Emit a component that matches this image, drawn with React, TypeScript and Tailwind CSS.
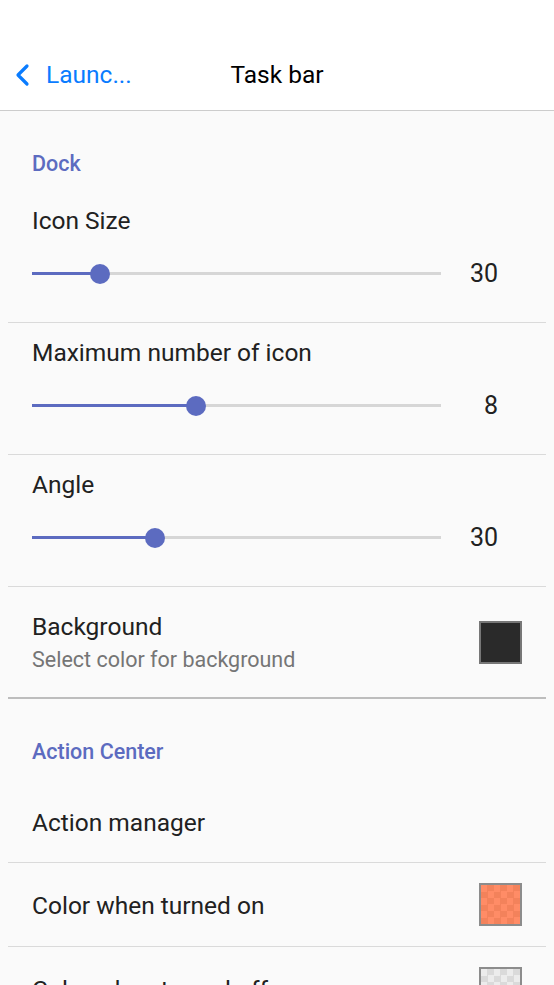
import React from "react";

const ACCENT = "#5c6bc0";

function SliderRow({ label, value, percent }: { label: string; value: string; percent: number }) {
  return (
    <div className="h-[132px] border-b border-[#dadada] pl-[24px] pt-[15px]">
      <div className="text-[24.5px] leading-[30px] text-[#212121]">{label}</div>
      <div className="mt-[23px] flex items-center">
        <div className="relative h-[20px] w-[409px]">
          <div className="absolute left-0 right-0 top-[8px] h-[3px] bg-[#d6d6d6]" />
          <div className="absolute left-0 top-[8px] h-[3px] bg-[#5c6bc0]" style={{ width: `${percent}%` }} />
          <div
            className="absolute top-0 -ml-[10px] h-[20px] w-[20px] rounded-full bg-[#5c6bc0]"
            style={{ left: `${percent}%` }}
          />
        </div>
        <div className="flex-1 pr-[48px] text-right text-[25px] leading-[30px] text-[#212121]">{value}</div>
      </div>
    </div>
  );
}

function SectionHeader({ title }: { title: string }) {
  return (
    <div className="h-[80px] pl-[24px] pt-[40px] text-[21.5px] font-medium leading-[26px]" style={{ color: ACCENT }}>
      {title}
    </div>
  );
}

function Swatch({ kind }: { kind: "dark" | "orange" | "gray" }) {
  if (kind === "dark") {
    return <div className="h-[43px] w-[43px] border-2 border-[#777777] bg-[#2a2a2a]" />;
  }
  if (kind === "orange") {
    return (
      <div className="h-[43px] w-[43px] border-2 border-[#8c8c8c] bg-[#ff8a65] bg-[image:conic-gradient(#f3825b_25%,#ff8c66_0_50%,#f3825b_0_75%,#ff8c66_0)] bg-[length:13px_13px]" />
    );
  }
  return (
    <div className="h-[43px] w-[43px] border-2 border-[#8c8c8c] bg-[#e6e6e6] bg-[image:conic-gradient(#dadada_25%,#ececec_0_50%,#dadada_0_75%,#ececec_0)] bg-[length:13px_13px]" />
  );
}

export default function App() {
  return (
    <div className="min-h-screen w-[554px] overflow-hidden bg-[#fafafa] font-[Roboto,'Liberation_Sans',sans-serif]">
      {/* Nav bar */}
      <div className="h-[111px] border-b border-[#cccccc] bg-white pt-[40px]">
        <div className="relative flex h-[70px] items-center">
          <div className="flex items-center pl-[14px] text-[#0a7cff]">
            <svg width="17" height="24" viewBox="0 0 17 24" fill="none">
              <polyline points="13,3 4,12 13,21" stroke="#0a7cff" strokeWidth="3.2" strokeLinecap="round" strokeLinejoin="round" />
            </svg>
            <span className="ml-[15px] text-[24.5px] leading-[28px]">Launc...</span>
          </div>
          <div className="absolute left-0 right-0 text-center text-[24.5px] leading-[28px] text-black">Task bar</div>
        </div>
      </div>

      <div className="mx-[8px]">
        <SectionHeader title="Dock" />
        <SliderRow label="Icon Size" value="30" percent={16.6} />
        <SliderRow label="Maximum number of icon" value="8" percent={40.1} />
        <SliderRow label="Angle" value="30" percent={30.1} />

        <div className="flex h-[112px] items-center justify-between border-b-2 border-[#bdbdbd] pl-[24px] pr-[24px]">
          <div>
            <div className="text-[24.5px] leading-[30px] text-[#212121]">Background</div>
            <div className="mt-[5px] text-[21.5px] leading-[25px] text-[#757575]">Select color for background</div>
          </div>
          <Swatch kind="dark" />
        </div>

        <SectionHeader title="Action Center" />
        <div className="flex h-[84px] items-center border-b border-[#dadada] pl-[24px] pt-[4px]">
          <span className="text-[24.5px] leading-[30px] text-[#212121]">Action manager</span>
        </div>
        <div className="flex h-[84px] items-center justify-between border-b border-[#dadada] pl-[24px] pr-[24px]">
          <span className="pt-[3px] text-[24.5px] leading-[30px] text-[#212121]">Color when turned on</span>
          <Swatch kind="orange" />
        </div>
        <div className="flex h-[84px] items-center justify-between border-b border-[#dadada] pl-[24px] pr-[24px]">
          <span className="pt-[3px] text-[24.5px] leading-[30px] text-[#212121]">Color when turned off</span>
          <Swatch kind="gray" />
        </div>
      </div>
    </div>
  );
}
